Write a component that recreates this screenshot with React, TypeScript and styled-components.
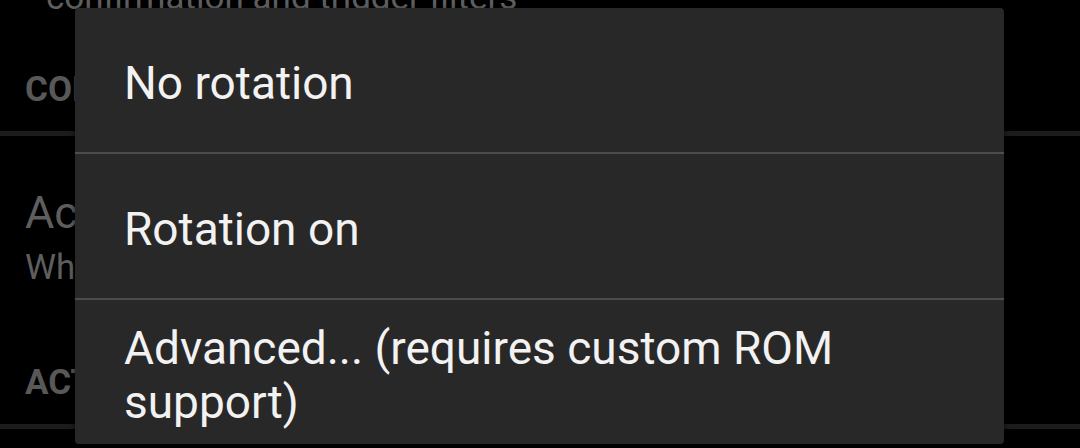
import React from 'react';
import styled, { createGlobalStyle } from 'styled-components';

const GlobalStyle = createGlobalStyle`
  html, body {
    margin: 0;
    padding: 0;
    background: #000;
    overflow: hidden;
  }
  body {
    font-family: Roboto, "Noto Sans", "Liberation Sans", sans-serif;
    -webkit-font-smoothing: antialiased;
  }
`;

const Screen = styled.div`
  position: relative;
  width: 1080px;
  height: 448px;
  overflow: hidden;
  background: #000;
`;

// the preference list sitting behind the popup, scrolled a little
const PrefList = styled.div`
  display: flex;
  flex-direction: column;
  margin-top: -23px;
`;

const Summary = styled.div<{ $indent?: number }>`
  padding-left: ${(p) => p.$indent ?? 25}px;
  font-size: 35px;
  line-height: 42px;
  color: #5e5e5e;
  white-space: nowrap;
`;

const CategoryHeader = styled.div`
  padding: 50px 0 20px 25px;
  font-size: 35px;
  line-height: 42px;
  font-weight: 700;
  color: #585858;
  white-space: nowrap;
`;

const Divider = styled.div`
  height: 5px;
  background: #1c1c1c;
`;

const PrefItem = styled.div`
  display: flex;
  flex-direction: column;
  gap: 7px;
  padding: 50px 0 23px;
`;

const PrefTitle = styled.div`
  padding-left: 25px;
  font-size: 45px;
  line-height: 54px;
  color: #5e5e5e;
  white-space: nowrap;
`;

const Popup = styled.div`
  position: absolute;
  left: 75px;
  top: 8px;
  width: 929px;
  background: #282828;
  border-radius: 4px;
  box-shadow: 0 2px 5px rgba(0, 0, 0, 0.7);
  display: flex;
  flex-direction: column;
  overflow: hidden;
`;

const MenuItem = styled.div`
  min-height: 108px;
  box-sizing: content-box;
  padding: 21px 60px 15px 49px;
  display: flex;
  align-items: center;
  font-size: 46px;
  line-height: 54px;
  color: #f2f2f2;
`;

const MenuDivider = styled.div`
  height: 2px;
  background: #4c4c4c;
`;

const options = [
  'No rotation',
  'Rotation on',
  'Advanced... (requires custom ROM support)',
];

export default function App() {
  return (
    <>
      <GlobalStyle />
      <Screen>
        <PrefList>
          <Summary $indent={46}>confirmation and trigger filters</Summary>
          <CategoryHeader>CONFIRMATION</CategoryHeader>
          <Divider />
          <PrefItem>
            <PrefTitle>Activation</PrefTitle>
            <Summary>When to activate rotation</Summary>
          </PrefItem>
          <CategoryHeader>ACTIONS</CategoryHeader>
          <Divider />
        </PrefList>
        <Popup>
          {options.map((o, i) => (
            <React.Fragment key={o}>
              {i > 0 && <MenuDivider />}
              <MenuItem>{o}</MenuItem>
            </React.Fragment>
          ))}
        </Popup>
      </Screen>
    </>
  );
}
